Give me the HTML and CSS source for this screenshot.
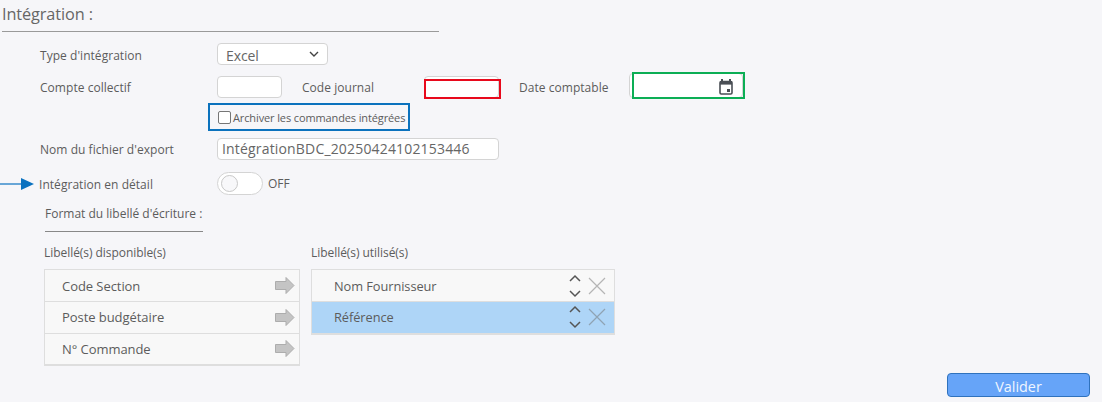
FILE: index.html
```html
<!DOCTYPE html>
<html lang="fr">
<head>
<meta charset="utf-8">
<title>Intégration</title>
<link rel="stylesheet" href="styles.css">
</head>
<body>
<div class="page">
  <h1 class="title">Intégration :</h1>

  <div class="row row-type">
    <label class="label label-type">Type d'intégration</label>
    <div class="select"><span class="select-value">Excel</span>
      <svg class="chev" width="10" height="6" viewBox="0 0 10 6"><path d="M1 1l4 4 4-4" fill="none" stroke="#444" stroke-width="1.4"/></svg>
    </div>
  </div>

  <div class="row row-compte">
    <label class="label">Compte collectif</label>
    <div class="input input-compte"></div>
    <label class="label-code">Code journal</label>
    <div class="input input-code"><span class="mark mark-red"></span></div>
    <label class="label-date">Date comptable</label>
    <div class="input input-date">
      <span class="mark mark-green"></span>
      <svg class="cal" width="14" height="16" viewBox="0 0 14 16"><path d="M3 0v2M11 0v2" stroke="#4a4f55" stroke-width="2"/><rect x="1" y="2.500" width="12" height="12.500" rx="1.200" fill="none" stroke="#4a4f55" stroke-width="1.600"/><rect x="1" y="2" width="12" height="3.600" fill="#4a4f55"/><rect x="8" y="10" width="3" height="3" fill="#4a4f55"/></svg>
    </div>
  </div>

  <div class="row row-archive">
    <div class="archive">
      <span class="check"></span>
      <span>Archiver les commandes intégrées</span>
    </div>
  </div>

  <div class="row row-nom">
    <label class="label">Nom du fichier d'export</label>
    <div class="input input-nom">IntégrationBDC_20250424102153446</div>
  </div>

  <div class="row row-detail">
    <svg class="arrow" width="35" height="14" viewBox="0 0 35 14"><path d="M0 7h22" stroke="#0b72c0" stroke-width="1.200"/><path d="M21 1l13 6-13 6z" fill="#0b72c0"/></svg>
    <label class="label label-detail">Intégration en détail</label>
    <div class="toggle"><span class="knob"></span></div>
    <span class="off">OFF</span>
  </div>

  <div class="format">Format du libellé d'écriture :</div>

  <div class="lists">
    <section class="col col-left">
      <div class="col-title">Libellé(s) disponible(s)</div>
      <ul class="list">
        <li class="item"><span>Code Section</span><svg class="go" width="20" height="17" viewBox="0 0 20 17"><path d="M0.500 4.500h10.500v-4l8 8-8 8v-4H0.500z" fill="#c4c4c4" stroke="#adadad"/></svg></li>
        <li class="item"><span>Poste budgétaire</span><svg class="go" width="20" height="17" viewBox="0 0 20 17"><path d="M0.500 4.500h10.500v-4l8 8-8 8v-4H0.500z" fill="#c4c4c4" stroke="#adadad"/></svg></li>
        <li class="item"><span>N° Commande</span><svg class="go" width="20" height="17" viewBox="0 0 20 17"><path d="M0.500 4.500h10.500v-4l8 8-8 8v-4H0.500z" fill="#c4c4c4" stroke="#adadad"/></svg></li>
      </ul>
    </section>
    <section class="col col-right">
      <div class="col-title">Libellé(s) utilisé(s)</div>
      <ul class="list">
        <li class="item item-used"><span>Nom Fournisseur</span>
          <span class="tools">
            <svg width="12" height="24" viewBox="0 0 12 24"><path d="M1 7l5-5 5 5M1 17l5 5 5-5" fill="none" stroke="#555" stroke-width="1.500"/></svg>
            <svg width="18" height="18" viewBox="0 0 18 18"><path d="M1 1l16 16M17 1L1 17" stroke="#b5b5b5" stroke-width="1.200"/></svg>
          </span>
        </li>
        <li class="item item-used selected"><span>Référence</span>
          <span class="tools">
            <svg width="12" height="24" viewBox="0 0 12 24"><path d="M1 7l5-5 5 5M1 17l5 5 5-5" fill="none" stroke="#555" stroke-width="1.500"/></svg>
            <svg width="18" height="18" viewBox="0 0 18 18"><path d="M1 1l16 16M17 1L1 17" stroke="#8fa3b3" stroke-width="1.200"/></svg>
          </span>
        </li>
      </ul>
    </section>
  </div>

  <div class="actions"><button class="btn" type="button">Valider</button></div>
</div>
</body>
</html>
```

FILE: styles.css
```css
* { box-sizing: border-box; }
html, body { margin: 0; padding: 0; background: #fff; }
body { width: 1102px; height: 407px; overflow: hidden; font-family: "Open Sans", "Noto Sans", sans-serif; color: #555; }
.page { height: 402px; padding: 1px 12px 0 2px; background: #f6f6f9; }
.title { width: 437px; height: 31px; margin: 0; border-bottom: 1px solid #9a9a9a; font-size: 16.300px; font-weight: 400; line-height: 26px; color: #666; letter-spacing: -0.1px; }
.row { display: flex; align-items: center; padding-left: 38px; font-size: 12px; letter-spacing: 0.04px; }
.label { width: 177px; flex: none; color: #5c5c5c; }
.label-type { padding-top: 2px; }
.row-type { margin-top: 11px; height: 22px; }
.select { width: 111px; height: 22px; padding: 0 8px; display: flex; align-items: center; justify-content: space-between; background: #fff; border: 1px solid #d4d4d4; border-radius: 4px; font-size: 14px; color: #666; }
.select-value { padding-top: 2px; letter-spacing: -0.1px; }
.input { position: relative; height: 22px; background: #fff; border: 1px solid #d4d4d4; border-radius: 4px; }
.row-compte { margin-top: 11px; height: 22px; }
.input-compte { width: 65px; }
.label-code { width: 122px; padding-left: 20px; flex: none; margin-right: 20px; color: #5c5c5c; }
.input-code { width: 75px; margin-left: 0; }
.label-date { margin-left: 20px; width: 110px; flex: none; color: #5c5c5c; }
.input-date { width: 114px; height: 25px; margin-top: -3px; display: flex; align-items: center; justify-content: flex-end; padding-right: 9px; }
.cal { margin-top: 2px; }
.mark { position: absolute; border-style: solid; }
.mark-red { left: -1px; top: 2px; width: 77px; height: 20px; border-width: 2px; border-color: #e8091c; }
.mark-green { left: 2px; top: -2px; width: 113px; height: 27px; border-width: 2px; border-color: #0cae55; }
.row-archive { margin-top: 5px; padding-left: 206px; height: 28px; }
.archive { width: 202px; height: 28px; padding-left: 8px; display: flex; align-items: center; gap: 2px; border: 2px solid #0b72bd; font-size: 11px; letter-spacing: -0.12px; white-space: nowrap; color: #5c5c5c; }
.check { width: 13px; height: 13px; flex: none; background: #fff; border: 1px solid #767676; border-radius: 2px; }
.row-nom { margin-top: 7px; height: 22px; }
.input-nom { width: 282px; padding-left: 4px; font-size: 14px; line-height: 20px; letter-spacing: 0.17px; color: #666; white-space: nowrap; }
.row-detail { position: relative; margin-top: 12px; height: 23px; }
.arrow { position: absolute; left: -2px; top: 5px; }
.label-detail { margin-top: 1px; margin-left: -1px; margin-right: 1px; }
.toggle { position: relative; width: 46px; height: 23px; background: #fff; border: 1px solid #d4d4d4; border-radius: 12px; }
.knob { position: absolute; left: 3px; top: 2px; width: 17px; height: 17px; border: 1px solid #c8c8c8; border-radius: 50%; background: #f8f8fa; }
.off { margin-left: 5px; margin-top: -1px; color: #5c5c5c; font-size: 12px; }
.format { width: 158px; height: 26px; margin: 11px 0 0 43px; border-bottom: 1px solid #888; font-size: 12px; line-height: 16px; letter-spacing: 0; white-space: nowrap; color: #5c5c5c; }
.lists { display: flex; margin: 12px 0 0 42px; gap: 11px; font-size: 12px; letter-spacing: -0.05px; }
.col-left { width: 256px; }
.col-right { width: 304px; }
.col-title { height: 17px; line-height: 17px; margin-bottom: 8px; color: #5c5c5c; }
.list { list-style: none; margin: 0; padding: 0; border: 1px solid #dedede; border-bottom-width: 2px; }
.item { height: 31.500px; display: flex; align-items: center; justify-content: space-between; padding: 0 4px 0 17px; background: #f8f8f8; border-top: 1px solid #dedede; font-size: 13px; letter-spacing: -0.06px; color: #5c5c5c; }
.item:first-child { border-top: 0; height: 31px; }
.item-used { padding: 0 8px 0 22px; font-size: 12.800px; }
.selected { background: #aed5f7; }
.tools { display: flex; align-items: center; gap: 7px; }
.actions { display: flex; justify-content: flex-end; margin-top: 7px; }
.btn { width: 143px; height: 24px; padding: 3px 0 0; background: #66a4f8; border: 1px solid #2f72bd; border-radius: 4px; color: #f0f6ff; font-family: inherit; font-size: 14.400px; line-height: 18px; }
```
